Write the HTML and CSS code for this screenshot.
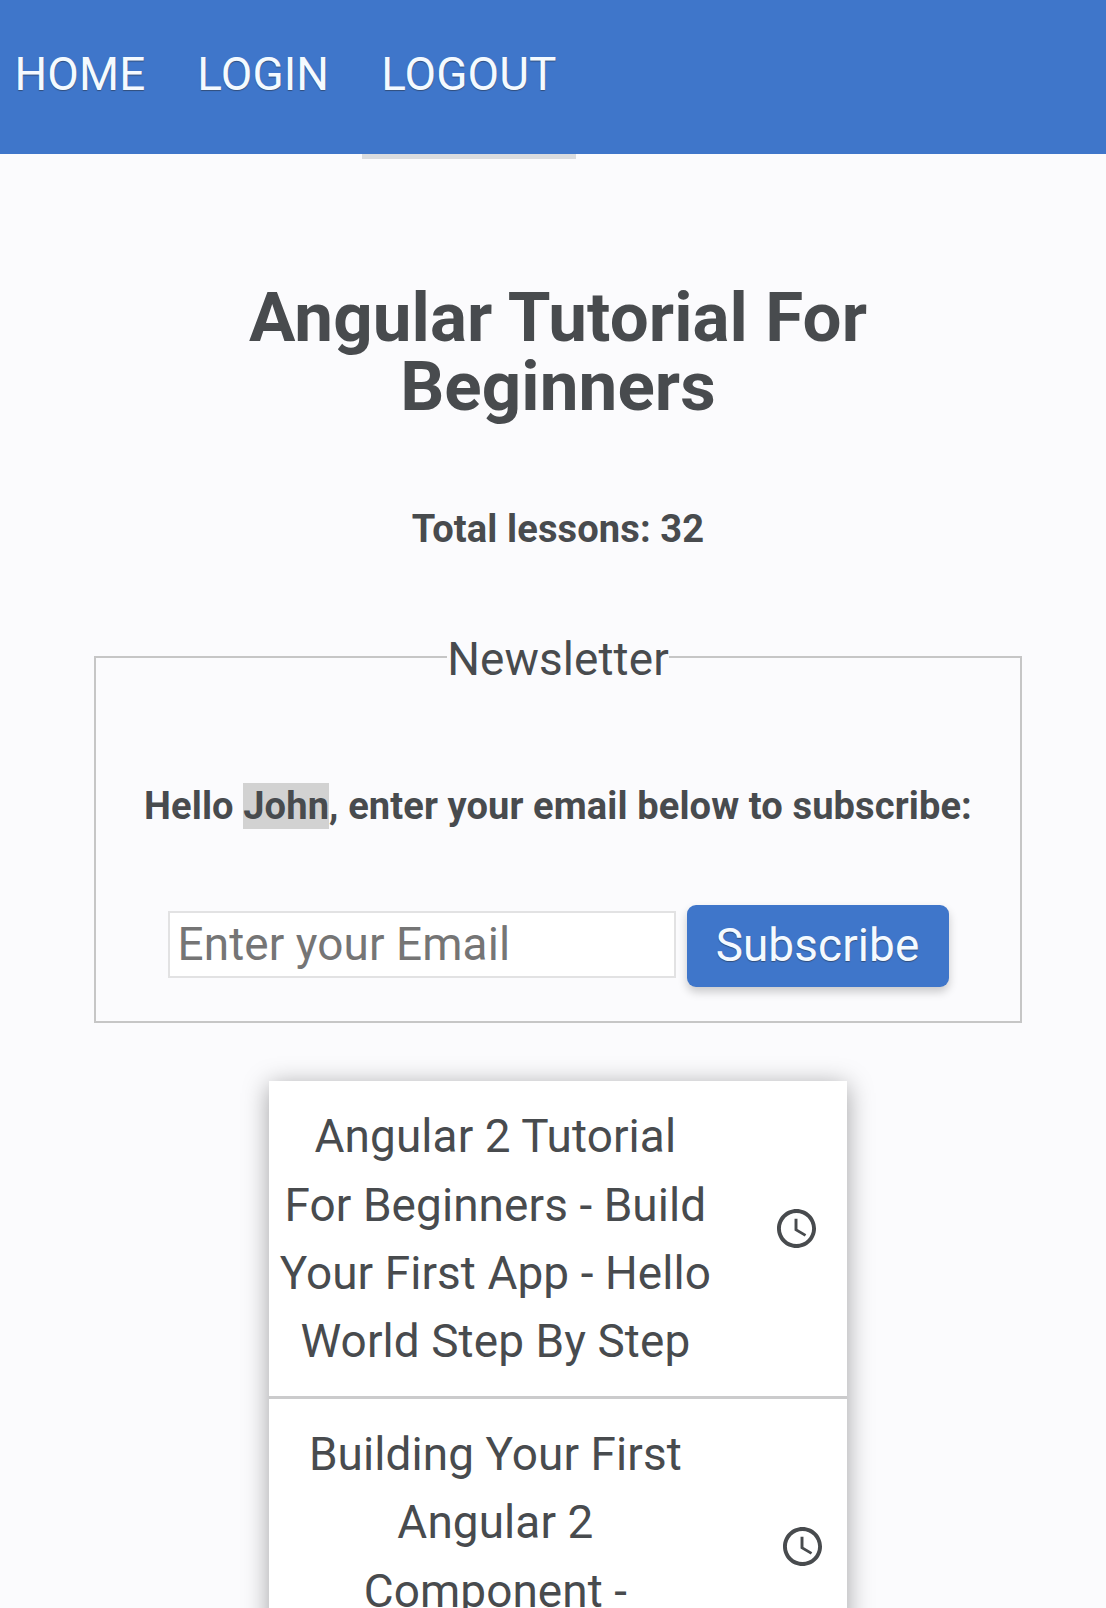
FILE: index.html
```html
<!DOCTYPE html>
<html lang="en">
<head>
<meta charset="utf-8">
<title>Angular Tutorial For Beginners</title>
<link rel="stylesheet" href="styles.css">
</head>
<body>
<header class="top-menu">
  <a class="menu-link">HOME</a>
  <a class="menu-link">LOGIN</a>
  <a class="menu-link">LOGOUT</a>
</header>
<main class="course">
  <div class="logo-edge"></div>
  <h1 class="title">Angular Tutorial For<br>Beginners</h1>
  <h5 class="total">Total lessons: 32</h5>
  <fieldset class="newsletter">
    <legend class="legend">Newsletter</legend>
    <h5 class="hello">Hello <span class="name">John</span>, enter your email below to subscribe:</h5>
    <form class="signup">
      <input class="email" type="email" placeholder="Enter your Email">
      <button class="subscribe" type="button">Subscribe</button>
    </form>
  </fieldset>
  <section class="lessons">
    <article class="lesson">
      <p class="lesson-name">Angular 2 Tutorial<br>For Beginners - Build<br>Your First App - Hello<br>World Step By Step</p>
      <svg class="clock" viewBox="2 2 20 20"><path d="M11.99 2C6.47 2 2 6.48 2 12s4.47 10 9.99 10C17.52 22 22 17.52 22 12S17.52 2 11.99 2zM12 20c-4.42 0-8-3.58-8-8s3.58-8 8-8 8 3.58 8 8-3.58 8-8 8zm.5-13H11v6l5.25 3.15.75-1.23-4.5-2.67z"/></svg>
    </article>
    <article class="lesson">
      <p class="lesson-name">Building Your First<br>Angular 2<br>Component -</p>
      <svg class="clock second" viewBox="2 2 20 20"><path d="M11.99 2C6.47 2 2 6.48 2 12s4.47 10 9.99 10C17.52 22 22 17.52 22 12S17.52 2 11.99 2zM12 20c-4.42 0-8-3.58-8-8s3.58-8 8-8 8 3.58 8 8-3.58 8-8 8zm.5-13H11v6l5.25 3.15.75-1.23-4.5-2.67z"/></svg>
    </article>
  </section>
</main>
</body>
</html>
```
FILE: styles.css
```css
* { box-sizing: border-box; }
html, body { height: 1608px; overflow: hidden; }
body {
  margin: 0;
  background: #fbfbfd;
  color: #484b4e;
  font: 45.9px/68.4px Roboto, sans-serif;
  letter-spacing: .1px;
}
.top-menu {
  display: flex;
  height: 154.4px;
  padding: 39.6px 0 0 14.5px;
  gap: 52px;
  background: #3f76ca;
  color: #f4faff;
}
.menu-link { text-shadow: 0 1px 1px rgba(40, 50, 70, .6); }
.course {
  width: 928px;
  margin-left: 94px;
  display: flex;
  flex-direction: column;
}
.logo-edge {
  width: 214px;
  height: 5px;
  margin-left: 268px;
  background: #dadcdf;
}
.title {
  margin: 124.6px 0 0;
  font-size: 69.1px;
  line-height: 68.6px;
  font-weight: 700;
  text-align: center;
}
.total, .hello {
  margin: 77.4px 0 0;
  font-size: 38.1px;
  line-height: 60px;
  font-weight: 700;
  text-align: center;
  white-space: nowrap;
}
.newsletter {
  height: 395px;
  margin: 69.6px 0 0;
  padding: 0;
  border: 2.5px solid #c6c6c6;
}
.legend {
  margin: 0 auto;
  padding: 4px 0 0;
  line-height: 54px;
}
.hello { margin-top: 90px; }
.name {
  padding: 1px 0;
  background: #d2d2d2;
}
.signup {
  display: flex;
  align-items: flex-start;
  justify-content: center;
  gap: 11px;
  margin-top: 69px;
}
.email {
  width: 508px;
  height: 67px;
  margin-top: 6px;
  padding: 0 8px;
  border: 2px solid #e2e2e3;
  background: #fff;
  font: inherit;
  letter-spacing: inherit;
}
.email::placeholder { color: #757575; }
.subscribe {
  width: 262px;
  height: 82px;
  padding: 0 0 2px;
  border: 0;
  border-radius: 9px;
  background: #3f76ca;
  color: #f4faff;
  font: inherit;
  letter-spacing: inherit;
  text-shadow: 0 1px 1px rgba(40, 50, 70, .6);
  box-shadow: 0 5px 10px rgba(0, 0, 0, .2);
}
.lessons {
  width: 578px;
  margin: 58px 0 0 175.4px;
  background: #fff;
  box-shadow: 0 4px 24px rgba(0, 0, 0, .36);
}
.lesson {
  display: flex;
  align-items: center;
  padding: 21px 0 20px;
  border-bottom: 3px solid #cbcbcc;
}
.lesson-name {
  width: 452px;
  min-height: 273.6px;
  margin: 0;
  text-align: center;
  white-space: nowrap;
}
.clock {
  width: 39px;
  height: 39px;
  margin: -21px 0 0 55.4px;
  fill: #484b4e;
}
.second { margin-left: 61.4px; }
```
